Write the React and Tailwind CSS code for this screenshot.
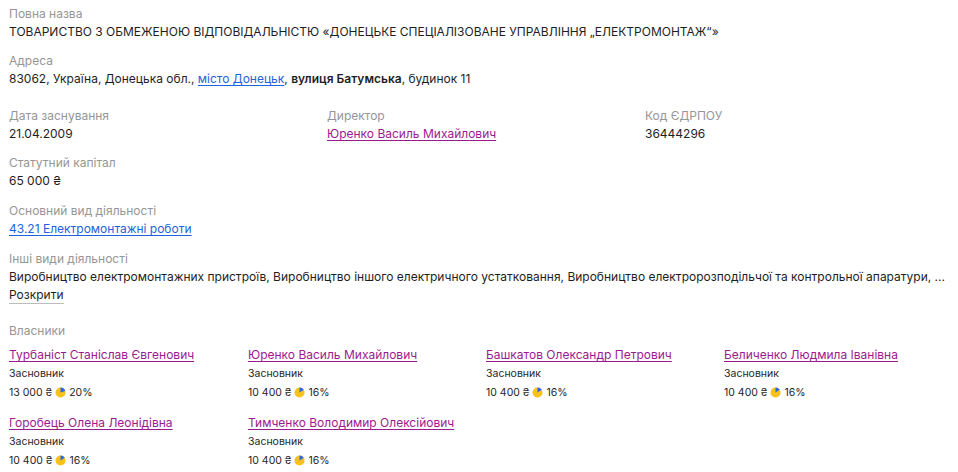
import React from 'react';

const Pie = ({ pct }) => {
    // yellow disc with a blue wedge from 12 o'clock, clockwise
    const a = (pct / 100) * Math.PI * 2;
    const x = 6 + 5.5 * Math.sin(a);
    const y = 6 - 5.5 * Math.cos(a);
    return (
        <svg width="11" height="11" viewBox="0 0 12 12" className="inline-block mx-[3px] -mt-[2px]">
            <circle cx="6" cy="6" r="5.5" fill="#f7c21b" />
            <path d={`M6 6 L6 0.5 A5.5 5.5 0 0 1 ${x.toFixed(2)} ${y.toFixed(2)} Z`} fill="#2d68e6" />
        </svg>
    );
};

const Label = ({ children }) => (
    <div className="text-[12px] leading-[18px] text-[#969696]">{children}</div>
);

const Value = ({ children }) => (
    <div className="text-[12px] leading-[18px] text-[#1e1e1e]">{children}</div>
);

const owners = [
    { name: 'Турбаніст Станіслав Євгенович', sum: '13 000 ₴', pct: 20 },
    { name: 'Юренко Василь Михайлович', sum: '10 400 ₴', pct: 16 },
    { name: 'Башкатов Олександр Петрович', sum: '10 400 ₴', pct: 16 },
    { name: 'Беличенко Людмила Іванівна', sum: '10 400 ₴', pct: 16 },
    { name: 'Горобець Олена Леонідівна', sum: '10 400 ₴', pct: 16 },
    { name: 'Тимченко Володимир Олексійович', sum: '10 400 ₴', pct: 16 },
];

const purple = 'text-[#9c1a8f] underline underline-offset-2';
const blue = 'text-[#1d63dc] underline underline-offset-2';

export default function App() {
    return (
        <div className="bg-white pl-[9px] pt-[5px] font-['Inter',sans-serif] antialiased">
            <div className="mb-[11px]">
                <Label>Повна назва</Label>
                <Value>ТОВАРИСТВО З ОБМЕЖЕНОЮ ВІДПОВІДАЛЬНІСТЮ «ДОНЕЦЬКЕ СПЕЦІАЛІЗОВАНЕ УПРАВЛІННЯ „ЕЛЕКТРОМОНТАЖ“»</Value>
            </div>
            <div className="mb-[19px]">
                <Label>Адреса</Label>
                <Value>
                    83062, Україна, Донецька обл., <a className={blue}>місто Донецьк</a>,{' '}
                    <span className="font-semibold">вулиця Батумська</span>, будинок 11
                </Value>
            </div>
            <div className="grid grid-cols-[318px_318px_1fr] mb-[11px]">
                <div>
                    <Label>Дата заснування</Label>
                    <Value>21.04.2009</Value>
                </div>
                <div>
                    <Label>Директор</Label>
                    <Value><a className={purple}>Юренко Василь Михайлович</a></Value>
                </div>
                <div>
                    <Label>Код ЄДРПОУ</Label>
                    <Value>36444296</Value>
                </div>
            </div>
            <div className="mb-[12px]">
                <Label>Статутний капітал</Label>
                <Value>65 000 ₴</Value>
            </div>
            <div className="mb-[12px]">
                <Label>Основний вид діяльності</Label>
                <Value><a className={blue}>43.21 Електромонтажні роботи</a></Value>
            </div>
            <div className="mb-[18px]">
                <Label>Інші види діяльності</Label>
                <Value>Виробництво електромонтажних пристроїв, Виробництво іншого електричного устатковання, Виробництво електророзподільчої та контрольної апаратури, ...</Value>
                <div className="text-[12px] leading-[18px] text-[#1e1e1e]">
                    <span className="border-b border-[#bdbdbd] pb-[1px]">Розкрити</span>
                </div>
            </div>
            <div>
                <Label>Власники</Label>
                <div className="grid grid-cols-[239px_238px_238px_1fr] gap-y-[9px] mt-[5px]">
                    {owners.map((o, i) => (
                        <div key={i}>
                            <div className="text-[12px] leading-[20px]">
                                <a className={purple}>{o.name}</a>
                            </div>
                            <div className="text-[10.5px] leading-[17px] text-[#262626]">Засновник</div>
                            <div className="text-[10.5px] leading-[22px] text-[#262626] flex items-center">
                                {o.sum}
                                <Pie pct={o.pct} />
                                {o.pct}%
                            </div>
                        </div>
                    ))}
                </div>
            </div>
        </div>
    );
}
